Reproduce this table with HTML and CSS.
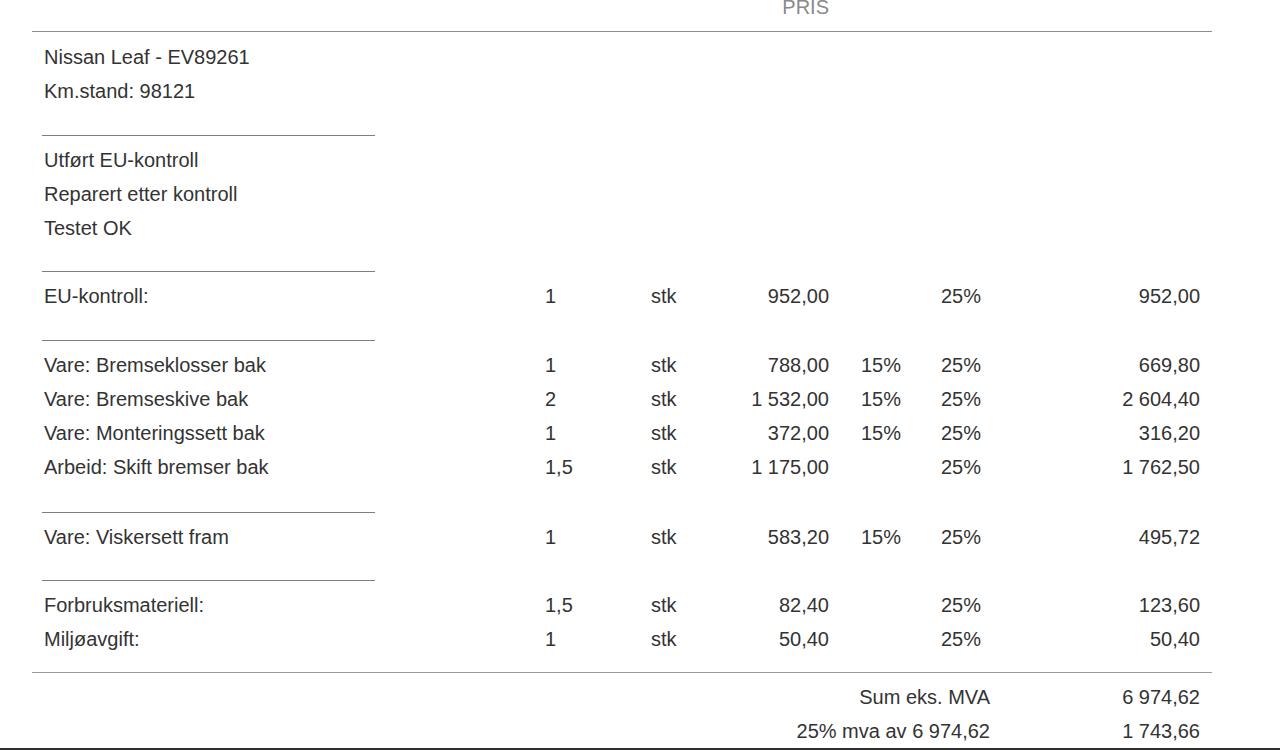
FILE: index.html
```html
<!DOCTYPE html>
<html lang="no">
<head>
<meta charset="utf-8">
<title>Faktura</title>
<link rel="stylesheet" href="styles.css">
</head>
<body>
<div class="page">
  <div class="header">
    <div class="row head-row">
      <span></span><span></span><span></span>
      <span class="num pris">PRIS</span>
    </div>
  </div>

  <div class="body">
    <div class="text-line">Nissan Leaf - EV89261</div>
    <div class="text-line">Km.stand: 98121</div>

    <div class="sep"></div>
    <div class="text-line">Utført EU-kontroll</div>
    <div class="text-line">Reparert etter kontroll</div>
    <div class="text-line">Testet OK</div>

    <div class="sep sep-tight"></div>
    <div class="row"><span>EU-kontroll:</span><span>1</span><span>stk</span><span class="num">952,00</span><span class="disc"></span><span>25%</span><span class="num">952,00</span></div>

    <div class="sep"></div>
    <div class="row"><span>Vare: Bremseklosser bak</span><span>1</span><span>stk</span><span class="num">788,00</span><span class="disc">15%</span><span>25%</span><span class="num">669,80</span></div>
    <div class="row"><span>Vare: Bremseskive bak</span><span>2</span><span>stk</span><span class="num">1 532,00</span><span class="disc">15%</span><span>25%</span><span class="num">2 604,40</span></div>
    <div class="row"><span>Vare: Monteringssett bak</span><span>1</span><span>stk</span><span class="num">372,00</span><span class="disc">15%</span><span>25%</span><span class="num">316,20</span></div>
    <div class="row"><span>Arbeid: Skift bremser bak</span><span>1,5</span><span>stk</span><span class="num">1 175,00</span><span class="disc"></span><span>25%</span><span class="num">1 762,50</span></div>

    <div class="sep sep-loose"></div>
    <div class="row"><span>Vare: Viskersett fram</span><span>1</span><span>stk</span><span class="num">583,20</span><span class="disc">15%</span><span>25%</span><span class="num">495,72</span></div>

    <div class="sep sep-tight"></div>
    <div class="row"><span>Forbruksmateriell:</span><span>1,5</span><span>stk</span><span class="num">82,40</span><span class="disc"></span><span>25%</span><span class="num">123,60</span></div>
    <div class="row"><span>Miljøavgift:</span><span>1</span><span>stk</span><span class="num">50,40</span><span class="disc"></span><span>25%</span><span class="num">50,40</span></div>
  </div>

  <div class="totals">
    <div class="total-row"><span class="num">Sum eks. MVA</span><span class="num">6 974,62</span></div>
    <div class="total-row"><span class="num">25% mva av 6 974,62</span><span class="num">1 743,66</span></div>
  </div>
</div>
<div class="bottom-bar"></div>
</body>
</html>
```

FILE: styles.css
```css
html, body {
  margin: 0;
  padding: 0;
  background: #ffffff;
}

body {
  font-family: "Liberation Sans", Arial, sans-serif;
  font-size: 20px;
  color: #333333;
  height: 750px;
  overflow: hidden;
  display: flex;
  flex-direction: column;
}

.page {
  width: 1180px;
  margin-left: 32px;
  flex: 1;
}

.header {
  height: 31px;
  border-bottom: 1px solid #8e8e8e;
  padding: 0 12px;
  overflow: hidden;
}

.body {
  padding: 8px 12px 0 12px;
}

.text-line {
  line-height: 34px;
  height: 34px;
}

.row {
  display: grid;
  grid-template-columns: 501px 106px 78px 100px 112px 1fr 140px;
  line-height: 34px;
  height: 34px;
  white-space: nowrap;
}

.header .head-row {
  line-height: 14px;
  height: 14px;
}

.pris {
  color: #8a8a8a;
}

.num {
  text-align: right;
}

.disc {
  padding-left: 32px;
}

.sep {
  width: 333px;
  margin: 27px 0 7px -2px;
  border-top: 1px solid #7e7e7e;
}

.sep-tight {
  margin-top: 26px;
}

.sep-loose {
  margin-top: 28px;
}

.totals {
  margin-top: 16px;
  border-top: 1px solid #9a9a9a;
  padding: 7px 12px 0 12px;
}

.total-row {
  display: grid;
  grid-template-columns: 1fr 210px;
  line-height: 34px;
  height: 34px;
  white-space: nowrap;
}

.bottom-bar {
  height: 2px;
  background: #2e2e2e;
  flex: none;
}
```
